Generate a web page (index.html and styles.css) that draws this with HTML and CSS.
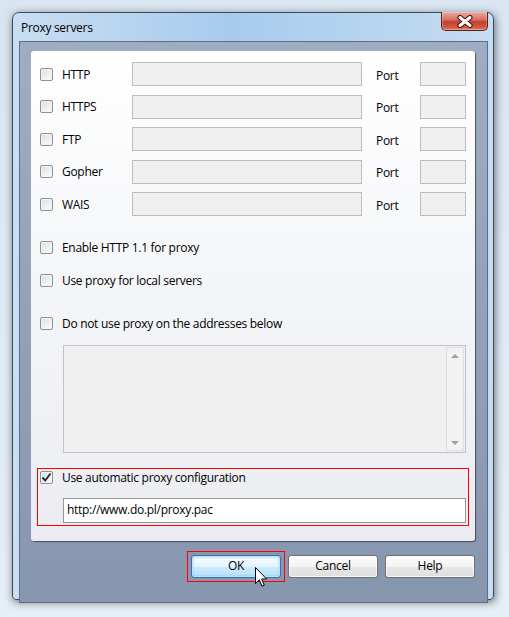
FILE: index.html
```html
<!DOCTYPE html>
<html lang="en">
<head>
    <meta charset="UTF-8">
    <title>Proxy servers</title>
    <link rel="stylesheet" href="styles.css">
</head>
<body>
    <div class="window">
        <div class="titlebar">
            <span class="title">Proxy servers</span>
            <div class="close">
                <svg width="18" height="13" viewBox="0 0 18 13">
                    <path d="M4 2.5 L14 10.5 M14 2.5 L4 10.5" stroke="#4a1510" stroke-width="5.2" stroke-linecap="round"/>
                    <path d="M4 2.5 L14 10.5 M14 2.5 L4 10.5" stroke="#fff" stroke-width="3" stroke-linecap="round"/>
                </svg>
            </div>
        </div>
        <div class="client">
            <div class="panel">
                <div class="servers">
                    <label class="check"><span class="box"></span>HTTP</label>
                    <span class="field"></span>
                    <span class="port-label">Port</span>
                    <span class="field"></span>

                    <label class="check"><span class="box"></span>HTTPS</label>
                    <span class="field"></span>
                    <span class="port-label">Port</span>
                    <span class="field"></span>

                    <label class="check"><span class="box"></span>FTP</label>
                    <span class="field"></span>
                    <span class="port-label">Port</span>
                    <span class="field"></span>

                    <label class="check"><span class="box"></span>Gopher</label>
                    <span class="field"></span>
                    <span class="port-label">Port</span>
                    <span class="field"></span>

                    <label class="check"><span class="box"></span>WAIS</label>
                    <span class="field"></span>
                    <span class="port-label">Port</span>
                    <span class="field"></span>
                </div>

                <label class="check option opt-http11"><span class="box"></span>Enable HTTP 1.1 for proxy</label>
                <label class="check option opt-local"><span class="box"></span>Use proxy for local servers</label>
                <label class="check option opt-bypass"><span class="box"></span>Do not use proxy on the addresses below</label>

                <div class="addresses">
                    <div class="scrollbar">
                        <span class="arrow up"></span>
                        <span class="arrow down"></span>
                    </div>
                </div>

                <div class="auto-config">
                    <label class="check">
                        <span class="box checked">
                            <svg width="11" height="11" viewBox="0 0 11 11">
                                <path d="M1.5 5.5 L4.2 8.5 L9.5 1.5" fill="none" stroke="#2b2b2b" stroke-width="1.9"/>
                            </svg>
                        </span>Use automatic proxy configuration
                    </label>
                    <div class="url">http://www.do.pl/proxy.pac</div>
                </div>
            </div>

            <div class="buttons">
                <div class="btn btn-ok">OK
                    <svg class="cursor" width="13" height="21" viewBox="0 0 13 21">
                        <path d="M0.5 0.5 L0.5 16.5 L4.3 12.8 L7 19.2 L9.3 18.2 L6.7 12 L11.6 12 Z" fill="#fff" stroke="#000" stroke-width="1"/>
                    </svg>
                </div>
                <div class="btn">Cancel</div>
                <div class="btn">Help</div>
            </div>
        </div>
    </div>
</body>
</html>
```

FILE: styles.css
```css
body { margin: 0; background: linear-gradient(#d9e5f1, #e6eef7); font-family: "Open Sans", sans-serif; font-size: 12px; letter-spacing: -0.3px; color: #000; height: 617px; overflow: hidden; }

.window { margin: 12px 0 0 12px; width: 482px; height: 588px; box-sizing: border-box; padding: 0 5px 5px 6px; border: 1px solid #3b4a5e; border-radius: 7px 7px 4px 4px; background: linear-gradient(90deg, #c9def2, #a8cbed 45%, #b4d3ef 70%, #c6dcf1); box-shadow: 1px 2px 9px rgba(0,0,0,0.55); }

.titlebar { height: 28px; display: flex; align-items: center; }
.title { padding-left: 2px; margin-top: 1px; }
.close { margin-left: auto; align-self: flex-start; margin-top: -1px; width: 45px; height: 18px; border: 1px solid #5a2019; border-top: none; border-radius: 0 0 5px 5px; background: linear-gradient(#e9a99d, #d8776a 40%, #c3402e 55%, #cf5a40 85%, #e08a6a); display: flex; align-items: center; justify-content: center; box-shadow: inset 0 0 0 1px rgba(255,255,255,0.25); }

.client { height: 551px; border: 1px solid #5d6d86; background: linear-gradient(#9eadc1, #8796af); padding-top: 9px; }

.panel { margin-left: 11px; width: 444px; height: 490px; box-sizing: border-box; padding: 11px 9px 0 9px; border-radius: 3px; background: linear-gradient(#ffffff, #f6f7f9 40%, #eaecf1); box-shadow: 1px 1px 1px rgba(40,45,60,0.7); }

.servers { display: grid; grid-template-columns: 92px 230px 58px 46px; row-gap: 8.5px; align-items: center; }

.check { display: flex; align-items: center; white-space: nowrap; }
.box { width: 11px; height: 11px; border: 1px solid #8e8f8f; border-radius: 2px; background: linear-gradient(135deg, #dcdfe3, #fbfbfb); box-shadow: inset 0 0 0 1px #f4f4f4; margin-right: 9px; display: flex; align-items: center; justify-content: center; flex-shrink: 0; }

.field { height: 22px; border: 1px solid #bdbdbd; background: #f0f0f0; }
.port-label { padding-left: 14px; margin-top: 2px; }

.option { height: 20px; }
.opt-http11 { margin-top: 21.5px; }
.opt-local { margin-top: 13px; }
.opt-bypass { margin-top: 23px; }

.addresses { margin: 11.5px 0 0 23px; height: 104px; border: 1px solid #c3c3c3; background: #f0f0f0; display: flex; justify-content: flex-end; padding: 1px; }
.scrollbar { width: 16px; border: 1px solid #dedede; background: #f2f2f2; display: flex; flex-direction: column; justify-content: space-between; align-items: center; padding: 6px 0 5px; }
.arrow { width: 0; height: 0; border-left: 4px solid transparent; border-right: 4px solid transparent; }
.arrow.up { border-bottom: 4px solid #9aa1aa; }
.arrow.down { border-top: 4px solid #9aa1aa; }

.auto-config { margin: 15px -3px 0 -3px; border: 1px solid #ff0000; padding: 2px; }
.auto-config .check { height: 13px; }
.url { margin: 14px 0 0 23px; height: 23px; border: 1px solid #979797; background: #fff; padding-left: 3px; line-height: 22px; }

.buttons { display: flex; justify-content: flex-end; gap: 7px; margin: 14px 12px 0 0; }
.btn { position: relative; width: 88px; height: 21px; line-height: 20px; text-align: center; border: 1px solid #707070; border-radius: 3px; background: linear-gradient(#fdfdfd, #f3f3f3 50%, #e7e7e7 51%, #dedede); box-shadow: inset 0 0 0 1px rgba(255,255,255,0.8); }
.btn-ok { border-color: #3c6fb0; background: linear-gradient(#f4fbff, #e4f4fd 50%, #cdebfc 51%, #b6e0f8); box-shadow: inset 0 0 0 1px #bfe3fb, inset 0 0 2px 1px #7fbdf0; }
.btn-ok::before { content: ""; position: absolute; left: -5px; top: -5px; right: -5px; bottom: -5px; border: 1px solid #ff0000; }
.cursor { position: absolute; left: 63px; top: 11px; }
```
